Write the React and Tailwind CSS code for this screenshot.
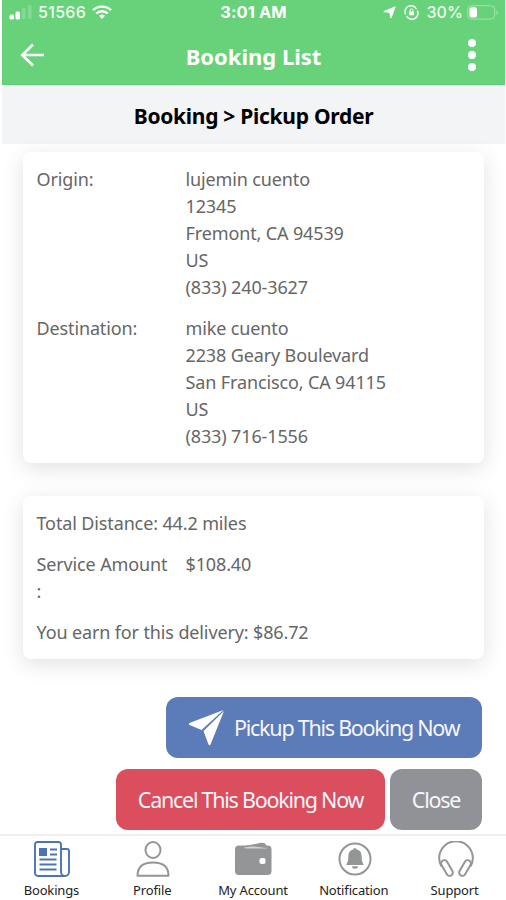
const origin = ['lujemin cuento', '12345', 'Fremont, CA 94539', 'US', '(833) 240-3627'];
const destination = ['mike cuento', '2238 Geary Boulevard', 'San Francisco, CA 94115', 'US', '(833) 716-1556'];

function StatusBar() {
  return (
    <div className="h-6 flex items-center justify-between pl-[7px] pr-[7px] font-['Inter',sans-serif] text-[#effbf0]">
      <div className="w-[200px] flex items-center">
        <svg className="shrink-0" width="24" height="16" viewBox="0 0 24 16" fill="#fff">
          <rect x="0.500" y="10.500" width="4.500" height="5" rx="1.500" />
          <rect x="6.500" y="7.500" width="4.500" height="8" rx="1.500" />
          <rect x="13" y="4" width="3.500" height="11" rx="1" opacity=".18" />
          <rect x="19" y="1" width="3.500" height="14" rx="1" opacity=".18" />
        </svg>
        <span className="ml-[5px] text-[16px] font-medium tracking-[0.3px]">51566</span>
        <svg className="ml-[6px]" width="20" height="16" viewBox="0 0 20 16" fill="none" stroke="#fff" strokeWidth="2.400">
          <path d="M1 6.200a13 13 0 0 1 18 0" />
          <path d="M4.300 9.500a8.300 8.300 0 0 1 11.400 0" />
          <path d="M7 11.800a4.600 4.600 0 0 1 6 0L10 15z" fill="#fff" stroke="none" />
        </svg>
      </div>
      <span className="text-[16.5px] font-bold tracking-[0.1px] text-white whitespace-nowrap">3:01 AM</span>
      <div className="w-[200px] flex items-center justify-end">
        <svg width="13" height="13" viewBox="0 0 13 13" fill="#fff" stroke="#fff" strokeLinejoin="round">
          <path d="M12.200.800 8 12 6.700 6.300 .8 5.600z" />
        </svg>
        <svg className="ml-[8px]" width="15" height="15" viewBox="0 0 15 15" fill="none" stroke="#fff" strokeWidth="1.500">
          <path d="M1.700 9.500A6 6 0 0 1 12.400 4M13.300 5.500A6 6 0 0 1 2.600 11" />
          <rect x="5.200" y="6.500" width="4.600" height="3.800" fill="#fff" stroke="none" />
          <path d="M6 6.600V5.400a1.500 1.500 0 0 1 3 0v1.200" strokeWidth="1" />
        </svg>
        <span className="ml-[7px] text-[16px] font-medium tracking-[0.1px]">30%</span>
        <svg className="ml-[4px]" width="31" height="15" viewBox="0 0 31 15">
          <rect x=".7" y=".7" width="27" height="13.400" rx="4" fill="none" stroke="#fff" strokeOpacity=".4" />
          <rect x="2.500" y="2.300" width="7.500" height="10.200" rx="2" fill="#fff" />
          <path d="M29.500 5v5q1.400-1 1.400-2.500T29.500 5" fill="#fff" opacity=".4" />
        </svg>
      </div>
    </div>
  );
}

function Address({ label, lines }) {
  return (
    <div className="flex">
      <div className="w-[149px]">{label}</div>
      <div>
        {lines.map((line) => (
          <p key={line}>{line}</p>
        ))}
      </div>
    </div>
  );
}

const grey = '#949596';

const tabs = [
  {
    label: 'Bookings',
    icon: (
      <svg className="ml-[2px]" width="36" height="36" viewBox="0 0 36 36" fill="none" stroke="#4b74b8" strokeWidth="1.900">
        <path d="M31 35H4a3 3 0 0 1-3-3V3.500A2.500 2.500 0 0 1 3.500 1h21A2.500 2.500 0 0 1 27 3.500V31a4 4 0 0 0 8 0V10a2 2 0 0 0-2-2h-6" />
        <rect x="5" y="7" width="8" height="8" fill="#4b74b8" stroke="none" />
        <path d="M16 8.500h7M16 13.500h7M5.500 18.500h17M5.500 23.500h17M5.500 28.500h17" />
      </svg>
    ),
  },
  {
    label: 'Profile',
    icon: (
      <svg className="ml-[2px]" width="34" height="36" viewBox="0 0 34 36" fill="none" stroke={grey} strokeWidth="2">
        <ellipse cx="17" cy="9" rx="7.500" ry="8" />
        <path d="M1.500 34.800C1.500 26 7 21.500 17 21.500s15.500 4.500 15.500 13.300z" strokeLinejoin="round" />
      </svg>
    ),
  },
  {
    label: 'My Account',
    icon: (
      <svg className="ml-[2px]" width="37" height="36" viewBox="0 0 37 36" fill={grey}>
        <path d="M7 5.500 26 1.800q4-.6 5 2.200l1 3H13z" />
        <rect x="0" y="4.500" width="36.500" height="29.500" rx="4" />
        <path d="M9 6.500 29 3.500 32 7.500H12q-3 0-3-1" fill="#d4d4d4" />
        <path d="m14 5 15-2.600 2 2.600v2z" />
        <rect x="24.500" y="17" width="6" height="6" rx="2" fill="#fff" />
      </svg>
    ),
  },
  {
    label: 'Notification',
    icon: (
      <svg className="ml-[2px]" width="34" height="36" viewBox="0 0 34 36" fill={grey}>
        <circle cx="17" cy="18" r="15.500" fill="none" stroke={grey} strokeWidth="2" />
        <path d="M17 7q1.500 0 1.700 1.500c4 .8 5 4 5 8 0 4 1 5 2 7.500H8.300c1-2.500 2-3.500 2-7.500 0-4 1-7.200 5-8q.2-1.500 1.700-1.500" />
        <path d="M14 25.200a3 2.500 0 0 0 6 0" />
      </svg>
    ),
  },
  {
    label: 'Support',
    icon: (
      <svg className="ml-[2px]" width="36" height="36" viewBox="0 0 36 36" fill="none" stroke={grey} strokeWidth="2">
        <path d="M3.500 25.500A16.800 16.800 0 1 1 32.500 25.500" />
        <rect x="-3.200" y="-8.500" width="6.400" height="17" rx="3.200" transform="translate(9 27) rotate(-30)" />
        <rect x="-3.200" y="-8.500" width="6.400" height="17" rx="3.200" transform="translate(27 27) rotate(30)" />
      </svg>
    ),
  },
];

export default function App() {
  return (
    <div className="w-[506px] h-[900px] overflow-hidden flex flex-col bg-white font-['Noto_Sans',sans-serif]">
      {/* Header */}
      <header className="ml-0.5 mr-px h-[85px] shrink-0 bg-[#68d27a] text-white border-b border-[#62c873]">
        <StatusBar />
        <div className="h-[62px] flex items-center justify-between pl-[18px] pr-[28px]">
          <svg width="25" height="24" viewBox="0 0 25 24" fill="none" stroke="#fff" strokeWidth="2.600">
            <path d="M24 12H2M13 1.500 2.200 12 13 22.500" />
          </svg>
          <h1 className="pt-0.5 pr-[5px] text-[22px] font-bold whitespace-nowrap">Booking List</h1>
          <svg width="10" height="34" viewBox="0 0 10 34" fill="#fff">
            <circle cx="5" cy="5" r="4" />
            <circle cx="5" cy="17" r="4" />
            <circle cx="5" cy="29" r="4" />
          </svg>
        </div>
      </header>

      <h2 className="ml-0.5 mr-px h-[59px] shrink-0 pt-1 flex items-center justify-center bg-[#f3f4f6] text-[21px] tracking-[-0.28px] font-bold text-black">
        Booking &gt; Pickup Order
      </h2>

      <main className="h-[690px] shrink-0 px-[23px] pt-2 text-[18px] leading-[27px] tracking-[-0.13px] text-[#666]">
        <section className="w-[461px] h-[311px] rounded-lg bg-white px-[13.500px] pt-[14px] flex flex-col gap-[14px] shadow-[0_5px_22px_rgba(0,0,0,0.12)]">
          <Address label="Origin:" lines={origin} />
          <Address label="Destination:" lines={destination} />
        </section>

        <section className="mt-[33px] w-[461px] h-[163px] rounded-lg bg-white px-[13.500px] pt-[14px] flex flex-col gap-[14px] shadow-[0_5px_22px_rgba(0,0,0,0.12)]">
          <p>Total Distance: 44.2 miles</p>
          <div className="flex">
            <div className="w-[149px]">Service Amount<br />:</div>
            <div>$108.40</div>
          </div>
          <p>You earn for this delivery: $86.72</p>
        </section>

        <div className="mt-[38px] w-[459px] flex flex-wrap justify-end gap-x-[5px] gap-y-[11px] text-[21.500px] tracking-[-1.250px] text-[#f6f6fb]">
          <button className="w-[316px] h-[61px] rounded-xl bg-[#5b7bb9] flex items-center pl-[22px] whitespace-nowrap">
            <svg className="mr-[9px] shrink-0" width="37" height="36" viewBox="0 0 36 36" fill="#fff">
              <path d="M35 0 1 13q-1.500 1 0 2l12 5z" />
              <path d="M35.500 1 22 34.500q-1 1.500-2 0L15 21z" />
            </svg>
            Pickup This Booking Now
          </button>
          <button className="w-[269px] h-[61px] rounded-xl bg-[#da4e5d] whitespace-nowrap">Cancel This Booking Now</button>
          <button className="w-[92px] h-[61px] rounded-xl bg-[#909298]">Close</button>
        </div>
      </main>

      {/* Bottom tabs */}
      <nav className="h-[66px] shrink-0 grid grid-cols-5 border-t-2 border-[#efefef] px-px">
        {tabs.map((tab) => (
          <div key={tab.label} className="flex flex-col items-center pt-[5px] text-[13px] leading-[27px] tracking-[-0.150px] text-[#222] whitespace-nowrap">
            {tab.icon}
            {tab.label}
          </div>
        ))}
      </nav>
    </div>
  );
}
